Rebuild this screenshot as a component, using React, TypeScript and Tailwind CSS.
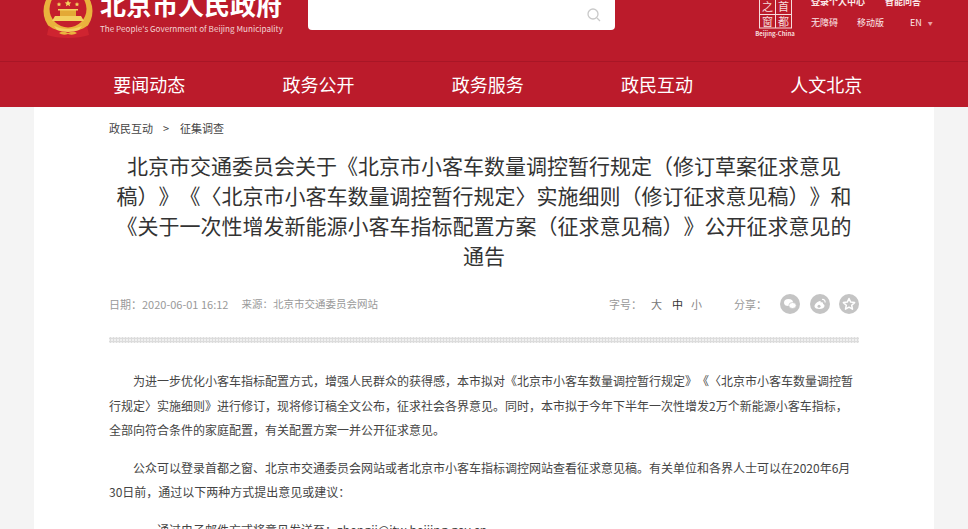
const font = "font-['Noto_Sans_CJK_SC','Liberation_Sans',sans-serif]";
const nav = ["要闻动态", "政务公开", "政务服务", "政民互动", "人文北京"];

function Emblem() {
  return (
    <svg width="52" height="40" viewBox="0 0 52 40">
      <circle cx="26" cy="12" r="24.500" fill="#eab33d" />
      <circle cx="26" cy="10" r="18.500" fill="#c51f2c" />
      <path d="M13 17h26l3 5H10z" fill="#f3d060" />
      <path d="M18 11h16v6H18z" fill="#e3a936" />
      <path d="M16 10h20v1.500H16z" fill="#f3d060" />
      <path d="M26 1l1 2.200 2.300.2-1.700 1.500.5 2.300-2.100-1.200-2.100 1.200.5-2.300-1.700-1.500 2.300-.2zM17 3l.7 1.500 1.600.2-1.200 1 .3 1.600-1.400-.8-1.400.8.3-1.600-1.200-1 1.600-.2zM35 3l.7 1.500 1.600.2-1.200 1 .3 1.600-1.400-.8-1.400.8.3-1.600-1.200-1 1.600-.2z" fill="#f4d35e" />
      <path d="M7 27c5 4 11 5 19 5s14-1 19-5l2 9c-6 2-13 3-21 3s-15-1-21-3z" fill="#cf2430" />
      <path d="M12 27c5 2 9 3 14 3s9-1 14-3l-3 4c-3 1-7 2-11 2s-8-1-11-2z" fill="#f3d060" />
      <path d="M17 34c3-2 6-1 9 0 3-1 6-2 9 0-3 2-6 2-9 1-3 1-6 1-9-1z" fill="#eab33d" />
    </svg>
  );
}

function Seal() {
  return (
    <svg width="42" height="38" viewBox="0 0 42 38" className="text-[#f6dcdc]">
      <rect x="5.500" y="-4" width="32" height="32" fill="none" stroke="currentColor" />
      <path d="M5.500 14.500h32M21.500 -4v32" stroke="currentColor" />
      <text x="13.500" y="11" fontSize="11" textAnchor="middle" fill="currentColor">之</text>
      <text x="29.500" y="11" fontSize="11" textAnchor="middle" fill="currentColor">首</text>
      <text x="13.500" y="25.500" fontSize="11" textAnchor="middle" fill="currentColor">窗</text>
      <text x="29.500" y="25.500" fontSize="11" textAnchor="middle" fill="currentColor">都</text>
      <text x="21" y="36" fontSize="6" fontWeight="700" textAnchor="middle" fill="currentColor">Beijing-China</text>
    </svg>
  );
}

function WechatIcon() {
  return (
    <svg width="20" height="20" viewBox="0 0 20 20">
      <circle cx="10" cy="10" r="10" fill="#c4c4c4" />
      <ellipse cx="8.500" cy="8.500" rx="4.500" ry="3.500" fill="#fff" />
      <ellipse cx="12.500" cy="11.500" rx="3.700" ry="3" fill="#fff" stroke="#c4c4c4" strokeWidth=".7" />
    </svg>
  );
}

function WeiboIcon() {
  return (
    <svg width="20" height="20" viewBox="0 0 20 20">
      <circle cx="10" cy="10" r="10" fill="#c4c4c4" />
      <path d="M4.500 12.500c0-2.500 3-5 5.500-5.500.5 0 1 .5.500 1.500 1.500-.5 3 0 2.500 1.500 1 .3 1.500 1 1.500 2 0 1.800-2.500 3-5 3s-5-.8-5-2.500z" fill="#fff" />
      <circle cx="9" cy="12.300" r="1.500" fill="#c4c4c4" />
      <path d="M12 5.500c2-.5 3.500 1 3 3" fill="none" stroke="#fff" strokeWidth="1.200" />
    </svg>
  );
}

function StarIcon() {
  return (
    <svg width="20" height="20" viewBox="0 0 20 20">
      <circle cx="10" cy="10" r="10" fill="#c4c4c4" />
      <path d="M10 4.500l1.700 3.600 3.900.5-2.900 2.700.8 3.900-3.500-2-3.500 2 .8-3.900-2.900-2.700 3.900-.5z" fill="none" stroke="#fff" strokeWidth="1.500" strokeLinejoin="round" />
    </svg>
  );
}

export default function App() {
  return (
    <div className={`h-screen overflow-hidden bg-[#f4f4f4] [text-spacing-trim:space-all] ${font}`}>
      {/* top header, scrolled a little */}
      <div className="flex h-[62px] items-start overflow-hidden border-b border-[#a81626] bg-[#bb1b2b] text-white">
        <div className="ml-[42px] -mt-[1px]">
          <Emblem />
        </div>
        <div className="ml-[6px] -mt-[13px] w-[200px]">
          <div className="text-[26px] font-bold leading-[34px]">北京市人民政府</div>
          <div className="mt-[2px] whitespace-nowrap text-[8.150px] leading-[12px] text-[#f3d4d4]">The People's Government of Beijing Municipality</div>
        </div>
        <div className="ml-[8px] flex h-[30px] w-[307px] items-center justify-end rounded-b-[4px] bg-white pr-[14px]">
          <svg width="14" height="14" viewBox="0 0 14 14" fill="none" stroke="#c9c9c9" strokeWidth="1.300">
            <circle cx="6" cy="6" r="5" />
            <path d="M10 10l3 3" />
          </svg>
        </div>
        <div className="ml-[139px]">
          <Seal />
        </div>
        <div className="ml-[15px] -mt-[4px] w-[130px] text-[9px] leading-[12px] text-[#fbeaea]">
          <div className="flex gap-[20px] font-bold">
            <span>登录个人中心</span>
            <span>智能问答</span>
          </div>
          <div className="mt-[9px] flex items-center">
            <span className="w-[46px]">无障碍</span>
            <span className="w-[53px]">移动版</span>
            <span>EN</span>
            <span className="ml-[6px] text-[5px] text-[#e8a0a8]">▼</span>
          </div>
        </div>
      </div>

      {/* nav */}
      <div className="flex h-[45px] items-center bg-[#bb1b2b] pl-[64.500px] text-white">
        {nav.map((item) => (
          <div key={item} className="w-[169.300px] text-center text-[18px] leading-[45px]">
            {item}
          </div>
        ))}
      </div>

      {/* article */}
      <div className="mx-auto w-[900px] bg-white px-[75px] pt-[14px]">
        <div className="flex h-[14px] items-center text-[11px] text-[#444]">
          <span>政民互动</span>
          <span className="ml-[10px]">&gt;</span>
          <span className="ml-[11px]">征集调查</span>
        </div>
        <h1 className="mt-[15px] text-center text-[21px] font-normal leading-[30px] text-[#333]">
          北京市交通委员会关于《北京市小客车数量调控暂行规定（修订草案征求意见稿）》《〈北京市小客车数量调控暂行规定〉实施细则（修订征求意见稿）》和《关于一次性增发新能源小客车指标配置方案（征求意见稿）》公开征求意见的通告
        </h1>
        <div className="mt-[24px] flex h-[20px] items-center text-[11px] text-[#999]">
          <span>日期：2020-06-01 16:12</span>
          <span className="ml-[13px] text-[10.500px]">来源：北京市交通委员会网站</span>
          <span className="ml-auto">字号：</span>
          <span className="ml-[9px] text-[#777]">大</span>
          <span className="ml-[10px] text-[#333]">中</span>
          <span className="ml-[8px] text-[#888]">小</span>
          <span className="ml-[32px]">分享：</span>
          <div className="ml-[13px] flex gap-[9.500px]">
            <WechatIcon />
            <WeiboIcon />
            <StarIcon />
          </div>
        </div>
        <div className="mt-[23px] h-[6px] bg-[radial-gradient(#dcdcdc_1.200px,#f0f0f0_1.200px)] bg-[length:3px_3px]" />
        <div className="mt-[26px] text-[12px] leading-[24.500px] text-[#444]">
          <p className="indent-[24px]">
            为进一步优化小客车指标配置方式，增强人民群众的获得感，本市拟对《北京市小客车数量调控暂行规定》《〈北京市小客车数量调控暂行规定〉实施细则》进行修订，现将修订稿全文公布，征求社会各界意见。同时，本市拟于今年下半年一次性增发2万个新能源小客车指标，全部向符合条件的家庭配置，有关配置方案一并公开征求意见。
          </p>
          <p className="mt-[13px] indent-[24px]">
            公众可以登录首都之窗、北京市交通委员会网站或者北京市小客车指标调控网站查看征求意见稿。有关单位和各界人士可以在2020年6月30日前，通过以下两种方式提出意见或建议：
          </p>
          <p className="mt-[13px] indent-[48px]">通过电子邮件方式将意见发送至：zhengji@jtw.beijing.gov.cn</p>
        </div>
      </div>
    </div>
  );
}
